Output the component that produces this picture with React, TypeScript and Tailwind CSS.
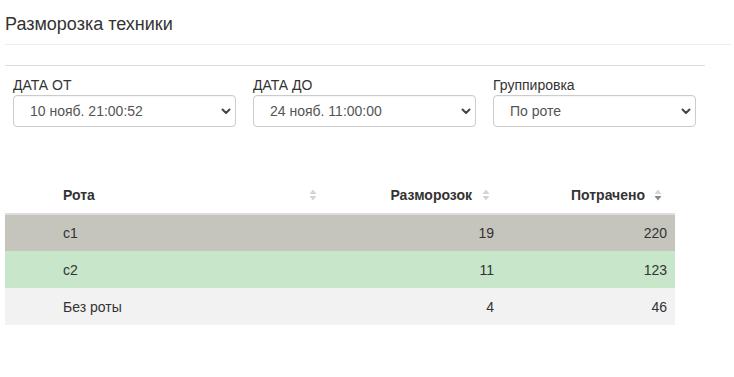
import React from 'react';

const font = "font-['Liberation_Sans',Arial,sans-serif]";

function Chevron() {
  return (
    <svg width="10" height="7" viewBox="0 0 10 7" className="shrink-0">
      <path d="M1.5 1.5 L5 5 L8.5 1.5" fill="none" stroke="#444" strokeWidth="2" strokeLinecap="round" strokeLinejoin="round" />
    </svg>
  );
}

function SortIcon({ active }: { active?: boolean }) {
  return (
    <svg width="8" height="12" viewBox="0 0 8 12" className="shrink-0">
      <path d="M4 0.5 L7.5 5 L0.5 5 Z" fill="#d4d4d4" />
      <path d="M4 11.5 L7.5 7 L0.5 7 Z" fill={active ? '#888' : '#d4d4d4'} />
    </svg>
  );
}

function Filter({ label, value, width }: { label: string; value: string; width: string }) {
  return (
    <div className={`flex flex-col ${width}`}>
      <label className="text-[14px] leading-[18px] text-[#333] mb-[1px]">{label}</label>
      <div className="h-[32px] border border-[#ccc] rounded-[4px] bg-white flex items-center justify-between pl-[16px] pr-[4px] shadow-[inset_0_1px_1px_rgba(0,0,0,0.04)]">
        <span className="text-[14px] text-[#555]">{value}</span>
        <Chevron />
      </div>
    </div>
  );
}

const rows = [
  { name: 'c1', count: 19, spent: 220, bg: 'bg-[#c5c5bd]' },
  { name: 'c2', count: 11, spent: 123, bg: 'bg-[#c8e6c9]' },
  { name: 'Без роты', count: 4, spent: 46, bg: 'bg-[#f2f2f2]' },
];

export default function App() {
  return (
    <div className={`${font} w-[734px] h-[377px] bg-white text-[#333]`}>
      {/* Title */}
      <div className="pl-[5px] pr-[3px]">
        <h1 className="text-[18px] leading-[20px] pt-[14px] pb-[10px] border-b border-[#eee]">Разморозка техники</h1>
      </div>

      <div className="pl-[5px] pr-[29px] pt-[20px]">
        <div className="border-t border-[#ddd]" />
      </div>

      {/* Filters */}
      <div className="flex pl-[13px] pt-[10px] gap-[17px]">
        <Filter label="ДАТА ОТ" value="10 нояб. 21:00:52" width="w-[223px]" />
        <Filter label="ДАТА ДО" value="24 нояб. 11:00:00" width="w-[223px]" />
        <Filter label="Группировка" value="По роте" width="w-[203px]" />
      </div>

      {/* Table */}
      <div className="pl-[5px] pt-[50px]">
        <table className="w-[670px] border-collapse text-[14px]">
          <thead>
            <tr className="border-b-2 border-[#ddd]">
              <th className="w-[320px] pl-[58px] pr-[8px] py-[8px] leading-[20px] text-left font-bold">
                <div className="flex items-center justify-between">
                  <span>Рота</span>
                  <SortIcon />
                </div>
              </th>
              <th className="w-[177px] pr-[12px] py-[8px] leading-[20px] text-right font-bold">
                <div className="flex items-center justify-end gap-[10px]">
                  <span>Разморозок</span>
                  <SortIcon />
                </div>
              </th>
              <th className="pr-[13px] py-[8px] leading-[20px] text-right font-bold">
                <div className="flex items-center justify-end gap-[9px]">
                  <span>Потрачено</span>
                  <SortIcon active />
                </div>
              </th>
            </tr>
          </thead>
          <tbody>
            {rows.map(r => (
              <tr key={r.name} className={r.bg}>
                <td className="pl-[58px] py-[8px] leading-[20px] h-[37px]">{r.name}</td>
                <td className="pr-[8px] py-[8px] leading-[20px] text-right">{r.count}</td>
                <td className="pr-[8px] py-[8px] leading-[20px] text-right">{r.spent}</td>
              </tr>
            ))}
          </tbody>
        </table>
      </div>
    </div>
  );
}
